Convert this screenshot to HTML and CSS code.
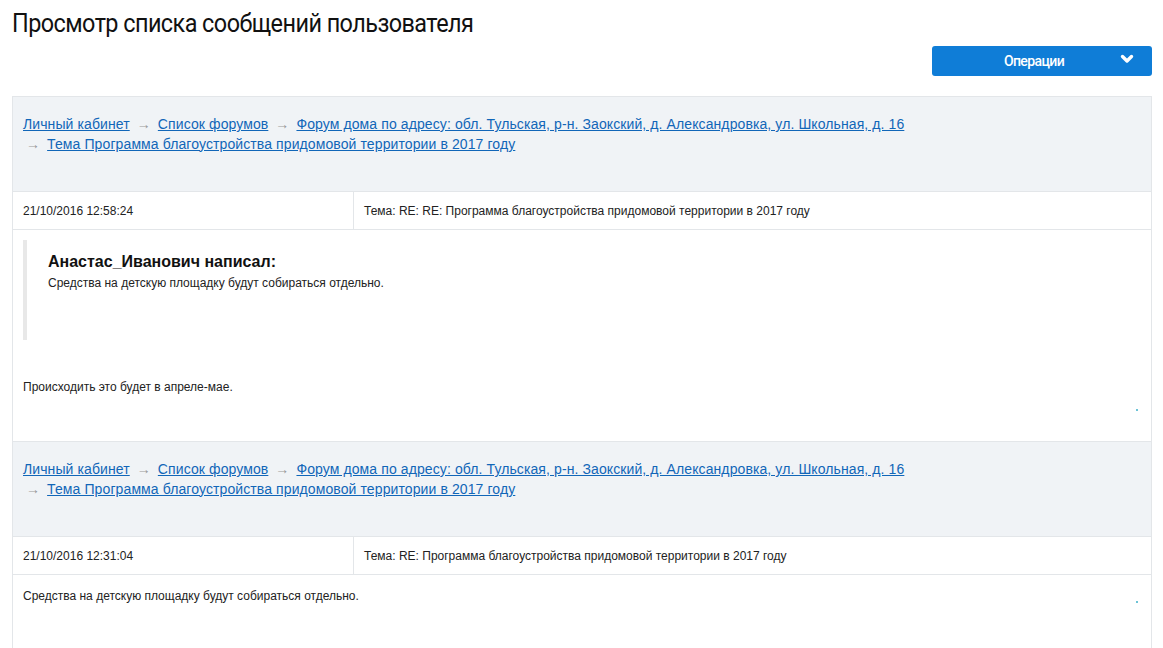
FILE: index.html
```html
<!DOCTYPE html>
<html lang="ru">
<head>
    <meta charset="UTF-8">
    <title>Просмотр списка сообщений пользователя</title>
    <link rel="stylesheet" href="styles.css">
</head>
<body>
    <h1 class="page-title"><span>Просмотр списка сообщений пользователя</span></h1>

    <div class="toolbar">
        <button class="ops-button">
            <span>Операции</span>
            <svg class="ops-chevron" width="14" height="10" viewBox="0 0 14 10">
                <polyline points="2.5,2.5 7,7 11.5,2.5" fill="none" stroke="#fff" stroke-width="3.4" stroke-linecap="round" stroke-linejoin="round"/>
            </svg>
        </button>
    </div>

    <div class="messages">
        <!-- сообщение 1 -->
        <div class="message">
            <div class="crumbs">
                <a href="#">Личный кабинет</a> <span class="arr">→</span>
                <a href="#">Список форумов</a> <span class="arr">→</span>
                <a href="#">Форум дома по адресу: обл. Тульская, р-н. Заокский, д. Александровка, ул. Школьная, д. 16</a><br>
                <span class="arr">→</span> <a href="#">Тема Программа благоустройства придомовой территории в 2017 году</a>
            </div>
            <div class="meta">
                <div class="meta-date">21/10/2016 12:58:24</div>
                <div class="meta-topic">Тема: RE: RE: Программа благоустройства придомовой территории в 2017 году</div>
            </div>
            <div class="msg-body">
                <blockquote class="quote">
                    <div class="quote-author">Анастас_Иванович написал:</div>
                    <div class="quote-text">Средства на детскую площадку будут собираться отдельно.</div>
                </blockquote>
                <p class="msg-text">Происходить это будет в апреле-мае.</p>
                <span class="dot"></span>
            </div>
        </div>

        <!-- сообщение 2 -->
        <div class="message">
            <div class="crumbs">
                <a href="#">Личный кабинет</a> <span class="arr">→</span>
                <a href="#">Список форумов</a> <span class="arr">→</span>
                <a href="#">Форум дома по адресу: обл. Тульская, р-н. Заокский, д. Александровка, ул. Школьная, д. 16</a><br>
                <span class="arr">→</span> <a href="#">Тема Программа благоустройства придомовой территории в 2017 году</a>
            </div>
            <div class="meta">
                <div class="meta-date">21/10/2016 12:31:04</div>
                <div class="meta-topic">Тема: RE: Программа благоустройства придомовой территории в 2017 году</div>
            </div>
            <div class="msg-body short">
                <p class="msg-text first">Средства на детскую площадку будут собираться отдельно.</p>
                <span class="dot"></span>
            </div>
        </div>
    </div>
</body>
</html>
```

FILE: styles.css
```css
body {
    margin: 0;
    padding: 0 11px 0 12px;
    font-family: "Liberation Sans", Arial, sans-serif;
    color: #222;
    background: #fff;
}

.page-title {
    margin: 0;
    padding-top: 8px;
    height: 38px;
    font-family: Roboto, "Liberation Sans", sans-serif;
    font-weight: 400;
    font-size: 26px;
    line-height: 30px;
    letter-spacing: -0.6px;
    color: #111;
    white-space: nowrap;
}

/* шрифт заголовка в оригинале узкий */
.page-title span {
    display: inline-block;
    transform: scaleX(0.9);
    transform-origin: left center;
}

.toolbar {
    display: flex;
    justify-content: flex-end;
    height: 50px;
}

.ops-button {
    position: relative;
    width: 220px;
    height: 30px;
    border: 0;
    border-radius: 3px;
    background: #0f7dd7;
    color: #fff;
    font-family: Roboto, "Liberation Sans", sans-serif;
    font-weight: 500;
    font-size: 14px;
    letter-spacing: -0.6px;
    display: flex;
    align-items: center;
    justify-content: center;
    padding: 0 16px 0 0;
}

.ops-chevron {
    position: absolute;
    right: 18px;
    top: 8px;
}

.messages {
    border: 1px solid #e3e6e9;
    border-bottom: 0;
}

.message {
    border-bottom: 1px solid #e3e6e9;
}

.crumbs {
    background: #f0f3f6;
    padding: 18px 10px 37px;
    font-size: 14px;
    line-height: 19.5px;
    letter-spacing: 0.1px;
    border-bottom: 1px solid #e3e6e9;
}

.crumbs a {
    color: #1166b8;
    text-decoration: underline;
}

.arr {
    color: #999;
    margin: 0 3px;
}

.crumbs br + .arr {
    margin-left: 3px;
}

.meta {
    display: flex;
    height: 37px;
    border-bottom: 1px solid #e3e6e9;
    font-size: 12px;
}

.meta-date {
    width: 330px;
    padding-left: 10px;
    display: flex;
    align-items: center;
    border-right: 1px solid #e3e6e9;
}

.meta-topic {
    padding-left: 10px;
    display: flex;
    align-items: center;
}

.msg-body {
    position: relative;
    height: 211px;
    padding: 10px 10px 0;
    box-sizing: border-box;
}

.msg-body.short {
    height: 80px;
}

.quote {
    margin: 0;
    height: 100px;
    box-sizing: border-box;
    border-left: 4px solid #e8e8e8;
    padding: 12px 0 0 21px;
}

.quote-author {
    font-weight: 700;
    font-size: 16px;
    line-height: 20px;
    color: #111;
}

.quote-text {
    margin-top: 3px;
    font-size: 12px;
    line-height: 16px;
}

.msg-text {
    margin: 39px 0 0;
    font-size: 12px;
    line-height: 16px;
}

.msg-text.first {
    margin-top: 3px;
}

.dot {
    position: absolute;
    right: 13px;
    bottom: 30px;
    width: 2px;
    height: 2px;
    background: #6cc3d6;
}

.short .dot {
    bottom: 52px;
}
```
